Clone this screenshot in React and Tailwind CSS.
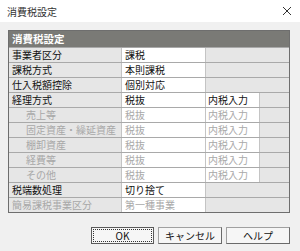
import React from 'react';

const rows = [
  { label: '事業者区分', value: '課税' },
  { label: '課税方式', value: '本則課税' },
  { label: '仕入税額控除', value: '個別対応' },
  { label: '経理方式', value: '税抜', extra: '内税入力' },
  { label: '売上等', value: '税抜', extra: '内税入力', sub: true },
  { label: '固定資産・繰延資産', value: '税抜', extra: '内税入力', sub: true },
  { label: '棚卸資産', value: '税抜', extra: '内税入力', sub: true },
  { label: '経費等', value: '税抜', extra: '内税入力', sub: true },
  { label: 'その他', value: '税抜', extra: '内税入力', sub: true },
  { label: '税端数処理', value: '切り捨て' },
  { label: '簡易課税事業区分', value: '第一種事業', disabled: true },
];

const App = () => {
  return (
    <div
      className="w-[300px] h-[251px] bg-[#f0f0f0] flex flex-col text-[10px] text-[#111]"
      style={{ fontFamily: '"Noto Sans CJK JP", "Noto Sans", sans-serif' }}
    >
      {/* Title bar */}
      <div className="h-[22px] bg-white flex items-center justify-between pl-[7px] pr-[8px]">
        <span className="text-[10px] text-[#333]">消費税設定</span>
        <svg width="10" height="10" viewBox="0 0 10 10">
          <path d="M1 1 L9 9 M9 1 L1 9" stroke="#333" strokeWidth="1" />
        </svg>
      </div>

      <div className="flex-1 px-[8px] pt-[8px] flex flex-col">
        {/* Settings table */}
        <div className="w-[282px] border border-[#6e6e6e] bg-[#e6e6e6]">
          <div className="h-[16px] bg-[#7a7a76] text-white font-bold text-[10.5px] leading-[16px] pl-[3px]">
            消費税設定
          </div>
          {rows.map((r, i) => {
            const gray = r.sub || r.disabled;
            return (
              <div
                key={i}
                className="grid grid-cols-[112px_84px_55px_29px] h-[15px] border-t border-[#a9a9a9] leading-[14px]"
              >
                <div className={`${r.sub ? 'pl-[17px]' : 'pl-[3px]'} ${gray ? 'text-[#a8a8a8]' : 'text-[#111]'} whitespace-nowrap overflow-hidden`}>
                  {r.label}
                </div>
                <div className={`bg-white border-l border-[#c4c4c4] pl-[3px] ${gray ? 'text-[#a8a8a8]' : 'text-[#111]'} whitespace-nowrap overflow-hidden`}>
                  {r.value}
                </div>
                <div className={`${r.extra ? 'bg-white border-r border-[#b8b8b8]' : ''} border-l border-[#c4c4c4] pl-[2px] ${r.sub ? 'text-[#a8a8a8]' : 'text-[#111]'} whitespace-nowrap overflow-hidden`}>
                  {r.extra}
                </div>
                <div></div>
              </div>
            );
          })}
        </div>

        {/* Buttons */}
        <div className="flex justify-end gap-[4px] mt-[14px] w-[282px]">
          <button className="w-[63px] h-[17px] bg-[#f6f6f6] border border-[#5a5a5a] p-[1px]">
            <div className="w-full h-full border border-dotted border-[#333] flex items-center justify-center text-[10px] leading-none">
              OK
            </div>
          </button>
          <button className="w-[64px] h-[17px] bg-[#f6f6f6] border border-[#a0a0a0] border-r-[#6a6a6a] border-b-[#6a6a6a] flex items-center justify-center text-[10px] leading-none">
            キャンセル
          </button>
          <button className="w-[64px] h-[17px] bg-[#f6f6f6] border border-[#a0a0a0] border-r-[#6a6a6a] border-b-[#6a6a6a] flex items-center justify-center text-[10px] leading-none">
            ヘルプ
          </button>
        </div>
      </div>
    </div>
  );
};

export default App;
